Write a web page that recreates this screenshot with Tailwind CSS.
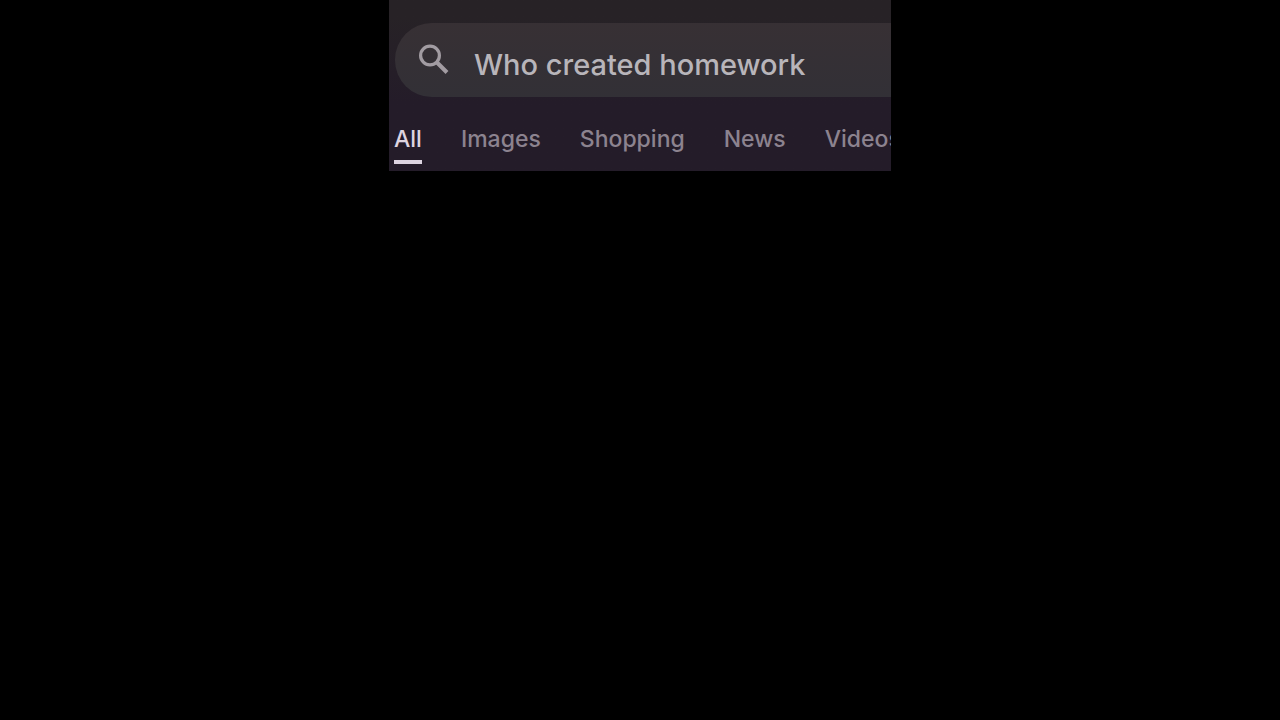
<!DOCTYPE html>
<html lang="en">
<head>
<meta charset="utf-8">
<meta name="viewport" content="width=device-width, initial-scale=1">
<title>Who created homework</title>
<script src="https://cdn.jsdelivr.net/npm/@tailwindcss/browser@4"></script>
</head>
<body class="min-h-screen bg-black">
<main class="mx-auto w-full max-w-[502px] overflow-hidden bg-linear-to-b from-[#272226] from-10% to-[#241c29] to-60% pt-[23px] pl-[5px]">
  <form role="search" class="ml-px flex h-[74px] items-center rounded-l-full bg-linear-to-b from-[#373034] to-[#323036] pl-5">
    <button type="submit" aria-label="Search" class="mr-[19px] shrink-0 text-[#a29ca2]">
      <svg class="size-10" viewBox="0 0 40 40" fill="none" stroke="currentColor" stroke-width="3.2" aria-hidden="true">
        <circle cx="15" cy="15.5" r="9.4"/>
        <path d="M21.5 22L32 32.5" stroke-width="4"/>
      </svg>
    </button>
    <input type="text" aria-label="Search query" value="Who created homework" class="h-full min-w-0 flex-1 bg-transparent pt-2 font-['Inter',sans-serif] text-[29px] font-medium text-[#b8b5ba] outline-none">
  </form>
  <nav aria-label="Search categories" class="flex gap-[39px] pt-7 pb-[7px] font-['Inter',sans-serif] text-[23px] leading-7 font-medium whitespace-nowrap text-[#8c838f]">
    <a href="#" aria-current="page" class="border-b-4 border-[#ddd4e0] pb-[7px] text-[#ddd4e0]">All</a>
    <a href="#">Images</a>
    <a href="#">Shopping</a>
    <a href="#">News</a>
    <a href="#">Videos</a>
  </nav>
</main>
</body>
</html>
